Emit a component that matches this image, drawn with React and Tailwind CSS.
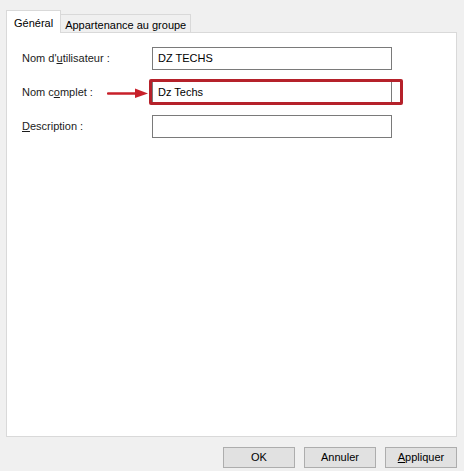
import React from 'react'

const font = { fontFamily: '"Liberation Sans", Arial, sans-serif' }

const Field = ({ label, value, highlight }) => (
  <div className="flex items-center h-[22px]">
    <div className="w-[130px] text-[11px] text-[#1b1b1b]">{label}</div>
    <div className="relative">
      <div className="w-[240px] h-[23px] border border-[#7a7a7a] bg-white px-[5px] flex items-center text-[11px] text-black">
        {value}
      </div>
      {highlight && (
        <>
          <div className="absolute -left-[3px] -top-[2px] w-[254px] h-[26px] border-[3px] border-[#b5212a] rounded-[2px]" />
          <svg className="absolute -left-[45px] top-[6px]" width="42" height="12" viewBox="0 0 42 12">
            <path d="M1 6.5 L30 6.5" stroke="#c8202a" strokeWidth="2.4" strokeLinecap="round" />
            <path d="M28 1.5 L41 6.5 L28 11 Z" fill="#c8202a" />
          </svg>
        </>
      )}
    </div>
  </div>
)

export default function App() {
  return (
    <div className="w-[464px] h-[471px] bg-[#f0f0f0] flex flex-col pt-[11px]" style={font}>
      <div className="flex items-end pl-[6px] h-[22px]">
        <div className="relative z-10 h-[23px] px-[7px] pt-[4px] bg-white border border-b-0 border-[#d9d9d9] text-[11px] text-black">
          Général
        </div>
        <div className="h-[19px] px-[4px] pt-[2px] bg-[#f0f0f0] border border-b-0 border-l-0 border-[#d9d9d9] text-[11px] text-black">
          Appartenance au groupe
        </div>
      </div>
      <div className="ml-[6px] w-[451px] h-[405px] -mt-px bg-white border border-[#d9d9d9] flex flex-col gap-[12px] pl-[15px] pt-[14px]">
        <Field label={<>Nom d'<span className="underline">u</span>tilisateur :</>} value="DZ TECHS" />
        <Field label={<>Nom c<span className="underline">o</span>mplet :</>} value="Dz Techs" highlight />
        <Field label={<><span className="underline">D</span>escription :</>} value="" />
      </div>
      <div className="flex justify-end gap-[9px] pr-[7px] mt-[10px]">
        {[
          ['OK'],
          ['Annuler'],
          [<><span className="underline">A</span>ppliquer</>],
        ].map(([t], i) => (
          <button
            key={i}
            className="w-[72px] h-[21px] bg-[#e1e1e1] border border-[#adadad] text-[11px] text-black flex items-center justify-center"
          >
            {t}
          </button>
        ))}
      </div>
    </div>
  )
}
